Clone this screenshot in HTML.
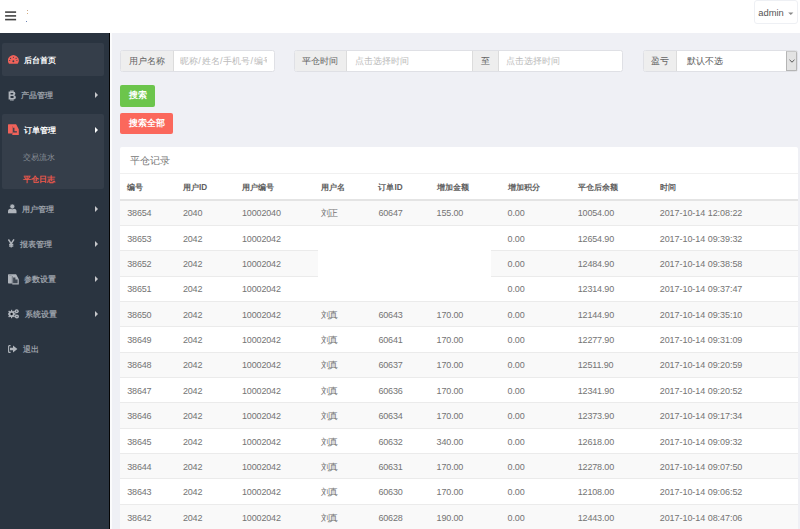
<!DOCTYPE html>
<html><head><meta charset="utf-8">
<style>
*{margin:0;padding:0;box-sizing:border-box}
html,body{width:800px;height:529px;overflow:hidden;background:#eff0f5;font-family:"Liberation Sans",sans-serif;}
.hdr{position:absolute;left:0;top:0;width:800px;height:33.4px;background:#fff;z-index:5;}
.burger i{position:absolute;left:5px;width:11px;height:1.4px;background:#4a4a4a;}
.admin{position:absolute;left:754.4px;top:0.3px;width:43.4px;height:23.5px;border:1px solid #eef0f4;border-radius:3px;background:#fff;}
.admin span{position:absolute;left:2.9px;top:6px;font-size:9.4px;color:#555;}
.admin b{position:absolute;left:33.3px;top:11.6px;width:0;height:0;border-left:2.8px solid transparent;border-right:2.8px solid transparent;border-top:2.8px solid #888;}
.side{position:absolute;left:0;top:33px;width:110px;height:496px;background:#2a3440;border-right:1px solid #050505;}
.hl{position:absolute;left:110px;top:33px;width:1.5px;height:496px;background:#fbfbfc;}
.item{position:absolute;left:2px;width:102px;height:33px;border-radius:2px;}
.item.on{background:#353e4a;}
.item .t{position:absolute;top:1.2px;line-height:33px;font-size:7.9px;color:#989ea6;font-weight:bold;white-space:nowrap;}
.item.on .t{color:#fff;font-weight:bold;}
.arr{position:absolute;left:93px;top:14.3px;width:0;height:0;border-top:3.2px solid transparent;border-bottom:3.2px solid transparent;border-left:3.4px solid #c8c8cc;}
.sub{position:absolute;left:20.5px;font-size:7.8px;color:#8a9098;white-space:nowrap;}
.ico{position:absolute;}
.main{position:absolute;left:111px;top:33px;width:689px;height:496px;}
.ig{position:absolute;height:22px;border:1px solid #dfe0e5;border-radius:2.5px;background:#fff;overflow:hidden;}
.ig .ad{position:absolute;top:0;height:20px;background:#eeeeee;border-right:1px solid #dcdcdc;font-size:9px;color:#646464;line-height:20px;text-align:center;}
.ig .ph{position:absolute;top:0;height:20px;font-size:9px;color:#bbb;line-height:20px;white-space:nowrap;}
.btn{position:absolute;left:9.4px;height:21.5px;border-radius:2px;color:#fff;font-size:9px;line-height:21.5px;text-align:center;font-weight:bold;}
.panel{position:absolute;left:9.40px;top:113.60px;width:677.40px;height:400px;background:#fff;border-radius:2px;}
.ptitle{position:absolute;left:0;top:0;width:100%;padding-left:9.4px;height:27.00px;line-height:27.00px;font-size:10.3px;color:#777;border-bottom:1px solid #f0f0f0;padding-top:0.2px;}
.row{position:absolute;left:0;width:100%;}
.row.s{background:#f9f9f9;}
.rt{position:absolute;left:0;width:100%;}
.rt span{position:absolute;top:0;font-size:9px;letter-spacing:-0.15px;color:#747474;white-space:nowrap;}
.th{position:absolute;left:0;width:100%;border-bottom:2px solid #e4e4e4;}
.th span{position:absolute;line-height:25px;font-size:8.2px;color:#606060;font-weight:bold;white-space:nowrap;}
.dd{position:absolute;right:0;top:0;width:10.6px;height:20px;background:#e3e3e3;border:1px solid #b5b5b5;border-top-color:#c8c8c8;}
.sl{font-style:normal;letter-spacing:0.8px;margin-left:0.3px}
.blank{position:absolute;background:#fff;}
</style></head><body>
<div class="hdr">
  <svg style="position:absolute;left:0;top:0" width="20" height="24" viewBox="0 0 20 24"><g fill="#444"><rect x="5.1" y="11.3" width="11" height="1.6"/><rect x="5.1" y="15.1" width="11" height="1.6"/><rect x="5.1" y="18.8" width="11" height="1.6"/></g></svg>
  <i style="position:absolute;left:26.6px;top:9.5px;width:0.9px;height:0.9px;background:#c9a98a"></i><i style="position:absolute;left:26.6px;top:12.8px;width:0.9px;height:0.9px;background:#d9b080"></i><i style="position:absolute;left:26.4px;top:20.5px;width:1.1px;height:1.1px;background:#6d84b5"></i>
  <div class="admin"><span>admin</span><svg style="position:absolute;left:32.6px;top:11.2px" width="6" height="4" viewBox="0 0 6 4"><path d="M0.2,0.5 H5.4 L2.8,3.1 Z" fill="#8a8a8a"/></svg></div>
</div>
<div class="side">
  <div class="item on" style="top:10px"><span class="t" style="left:21.5px">后台首页</span></div>
  <div class="item" style="top:45px"><span class="t" style="left:19px">产品管理</span><i class="arr"></i></div>
  <div class="item on" style="top:80.5px;height:75.7px"><span class="t" style="left:22px;top:0.5px">订单管理</span><i class="arr" style="border-left-color:#fff;top:13.8px"></i>
    <span class="sub" style="top:38.5px">交易流水</span>
    <span class="sub" style="top:60.5px;color:#f0594c;font-weight:bold">平仓日志</span>
  </div>
  <div class="item" style="top:158.5px"><span class="t" style="left:20px">用户管理</span><i class="arr"></i></div>
  <div class="item" style="top:193.5px"><span class="t" style="left:18px">报表管理</span><i class="arr"></i></div>
  <div class="item" style="top:228.5px"><span class="t" style="left:22px">参数设置</span><i class="arr"></i></div>
  <div class="item" style="top:263.5px"><span class="t" style="left:23px">系统设置</span><i class="arr"></i></div>
  <div class="item" style="top:298.5px"><span class="t" style="left:21px">退出</span></div>
<svg class="ico" style="left:8px;top:22px" width="11" height="9" viewBox="0 0 11 9"><path d="M1.0,8.7 A5.35,5.35 0 1 1 9.7,8.7 Z" fill="#f0625a"/><g fill="#353e4a"><circle cx="5.35" cy="6.2" r="0.95"/><circle cx="5.45" cy="2.3" r="0.55"/><circle cx="2.6" cy="3.4" r="0.55"/><circle cx="8.1" cy="3.4" r="0.55"/><circle cx="1.7" cy="5.5" r="0.55"/><circle cx="8.9" cy="5.5" r="0.55"/></g></svg>
<svg class="ico" style="left:7.6px;top:56.5px" width="9" height="11" viewBox="0 0 9 11"><path d="M0.6,1.6 H5 Q7.4,1.6 7.4,3.6 Q7.4,4.8 6.2,5.2 Q7.9,5.7 7.9,7.4 Q7.9,9.5 5.3,9.5 H0.6 Z M2.5,3.1 V4.6 H4.6 Q5.4,4.6 5.4,3.85 Q5.4,3.1 4.6,3.1 Z M2.5,5.9 V7.9 H4.8 Q5.8,7.9 5.8,6.9 Q5.8,5.9 4.8,5.9 Z" fill="#afb4bb" fill-rule="evenodd"/><rect x="2.4" y="0.3" width="1.2" height="1.6" fill="#afb4bb"/><rect x="4.3" y="0.3" width="1.2" height="1.6" fill="#afb4bb"/><rect x="2.4" y="9.2" width="1.2" height="1.6" fill="#afb4bb"/><rect x="4.3" y="9.2" width="1.2" height="1.6" fill="#afb4bb"/></svg>
<svg class="ico" style="left:8px;top:91px" width="11" height="11" viewBox="0 0 11 11"><path d="M0.6,0.2 H8.1 L10.8,5.2 V11 H4.3 V9.6 H0.6 Q0,9.6 0,9 V0.8 Q0,0.2 0.6,0.2 Z" fill="#f0625a"/><path d="M4.3,9.6 V2.2" stroke="#353e4a" stroke-width="0.5" opacity="0.6"/><path d="M5.1,3.8 H6.4 V7.3 H8.9 V8.6 H5.1 Z" fill="#353e4a"/></svg>
<svg class="ico" style="left:7.8px;top:170.5px" width="9" height="10" viewBox="0 0 9 10"><path d="M0,9.3 V7.4 Q0,4.7 2.6,4.7 H6 Q8.5,4.7 8.5,7.4 V9.3 Z" fill="#afb4bb"/><circle cx="4.3" cy="2.5" r="2.45" fill="#afb4bb" stroke="#2a3440" stroke-width="0.6"/></svg>
<svg class="ico" style="left:7.8px;top:205.5px" width="7" height="9" viewBox="0 0 7 9"><path d="M0.4,0.4 L3.2,4.6 L6,0.4" fill="none" stroke="#afb4bb" stroke-width="1.5"/><path d="M3.2,4.2 V8.4 M1.1,5.4 H5.3 M1.1,7 H5.3" stroke="#afb4bb" stroke-width="1.3" fill="none"/></svg>
<svg class="ico" style="left:7.8px;top:240.5px" width="11" height="11" viewBox="0 0 11 11"><path d="M0.6,0.2 H8.1 L10.8,5.2 V10.4 H4.3 V9.4 H0.6 Q0,9.4 0,8.8 V0.8 Q0,0.2 0.6,0.2 Z" fill="#afb4bb"/><path d="M4.3,9.4 V2.2" stroke="#2a3440" stroke-width="0.7" opacity="0.7"/><path d="M5.1,3.6 H7.4 V5.6 H9.6 V9.3 H5.1 Z" fill="#2a3440" opacity="0.85"/><rect x="1.2" y="1.4" width="2.4" height="0.6" fill="#2a3440" opacity="0.3"/></svg>
<svg class="ico" style="left:7.8px;top:276px" width="12" height="10" viewBox="0 0 12 10"><g fill="#afb4bb"><circle cx="3.6" cy="5" r="3.1"/><rect x="3" y="0.8" width="1.2" height="8.4"/><rect x="-0.6" y="4.4" width="8.4" height="1.2"/><rect x="3" y="0.8" width="1.2" height="8.4" transform="rotate(45 3.6 5)"/><rect x="3" y="0.8" width="1.2" height="8.4" transform="rotate(-45 3.6 5)"/><circle cx="8.7" cy="2.2" r="2"/><circle cx="8.9" cy="7.5" r="2.1"/></g><circle cx="3.6" cy="5" r="1.2" fill="#111820"/><circle cx="8.7" cy="2.2" r="0.6" fill="#2a3440"/><circle cx="8.9" cy="7.5" r="0.6" fill="#2a3440"/></svg>
<svg class="ico" style="left:7.6px;top:312px" width="10" height="8" viewBox="0 0 10 8"><path d="M2.6,0.6 H1.3 Q0.6,0.6 0.6,1.3 V6.7 Q0.6,7.4 1.3,7.4 H2.6" fill="none" stroke="#afb4bb" stroke-width="1.1"/><path d="M2,2.8 H5 V0.6 L9.4,4 L5,7.4 V5.2 H2 Z" fill="#afb4bb"/></svg>
</div>
<div class="hl"></div>
<div class="main">
  <div class="ig" style="left:9.4px;top:17px;width:155px"><div class="ad" style="left:0;width:52.5px">用户名称</div><div class="ph" style="left:58.6px;width:86.6px;overflow:hidden;font-size:9.2px">昵称<i class="sl">/</i>姓名<i class="sl">/</i>手机号<i class="sl">/</i>编号</div></div>
  <div class="ig" style="left:182.5px;top:17px;width:329px"><div class="ad" style="left:0;width:52.5px">平仓时间</div><div class="ph" style="left:60px">点击选择时间</div><div class="ad" style="left:177px;width:27px;border-left:1px solid #dcdcdc">至</div><div class="ph" style="left:211px">点击选择时间</div></div>
  <div class="ig" style="left:531.75px;top:17px;width:155px"><div class="ad" style="left:0;width:33px">盈亏</div><div class="ph" style="left:43.5px;color:#555">默认不选</div><div class="dd"><svg width="6" height="4" viewBox="0 0 6 4" style="position:absolute;left:1.4px;top:7.2px"><path d="M0.5,0.8 L3,3.2 L5.5,0.8" fill="none" stroke="#444" stroke-width="0.9"/></svg></div></div>
  <div class="btn" style="top:52px;width:34.5px;background:#6cc54c">搜索</div>
  <div class="btn" style="top:79.8px;height:21.2px;line-height:21.2px;width:52.5px;background:#fb685c">搜索全部</div>
  <div class="panel">
    <div class="ptitle">平仓记录</div>
<div class="th" style="top:27.00px;height:27.00px"><span style="left:6.8px;top:1.90px">编号</span><span style="left:62.5px;top:1.90px">用户ID</span><span style="left:121.6px;top:1.90px">用户编号</span><span style="left:200.2px;top:1.90px">用户名</span><span style="left:258.0px;top:1.90px">订单ID</span><span style="left:316.2px;top:1.90px">增加金额</span><span style="left:387.2px;top:1.90px">增加积分</span><span style="left:457.3px;top:1.90px">平仓后余额</span><span style="left:539.3px;top:1.90px">时间</span></div>
<div class="row s" style="top:54.00px;height:25.35px;"><div class="rt" style="top:0.80px;height:25.35px;line-height:25.35px"><span style="left:6.8px">38654</span><span style="left:62.5px">2040</span><span style="left:121.6px">10002040</span><span style="left:200.2px">刘正</span><span style="left:258.0px">60647</span><span style="left:316.2px">155.00</span><span style="left:387.2px">0.00</span><span style="left:457.3px">10054.00</span><span style="left:539.3px;letter-spacing:-0.05px">2017-10-14 12:08:22</span></div></div>
<div class="row" style="top:78.35px;height:26.35px;border-top:1px solid #ebebeb;"><div class="rt" style="top:0.80px;height:25.35px;line-height:25.35px"><span style="left:6.8px">38653</span><span style="left:62.5px">2042</span><span style="left:121.6px">10002042</span><span style="left:387.2px">0.00</span><span style="left:457.3px">12654.90</span><span style="left:539.3px;letter-spacing:-0.05px">2017-10-14 09:39:32</span></div></div>
<div class="row s" style="top:103.70px;height:26.35px;border-top:1px solid #ebebeb;"><div class="rt" style="top:0.80px;height:25.35px;line-height:25.35px"><span style="left:6.8px">38652</span><span style="left:62.5px">2042</span><span style="left:121.6px">10002042</span><span style="left:387.2px">0.00</span><span style="left:457.3px">12484.90</span><span style="left:539.3px;letter-spacing:-0.05px">2017-10-14 09:38:58</span></div></div>
<div class="row" style="top:129.05px;height:26.35px;border-top:1px solid #ebebeb;"><div class="rt" style="top:0.80px;height:25.35px;line-height:25.35px"><span style="left:6.8px">38651</span><span style="left:62.5px">2042</span><span style="left:121.6px">10002042</span><span style="left:387.2px">0.00</span><span style="left:457.3px">12314.90</span><span style="left:539.3px;letter-spacing:-0.05px">2017-10-14 09:37:47</span></div></div>
<div class="row s" style="top:154.40px;height:26.35px;border-top:1px solid #ebebeb;"><div class="rt" style="top:0.80px;height:25.35px;line-height:25.35px"><span style="left:6.8px">38650</span><span style="left:62.5px">2042</span><span style="left:121.6px">10002042</span><span style="left:200.2px">刘真</span><span style="left:258.0px">60643</span><span style="left:316.2px">170.00</span><span style="left:387.2px">0.00</span><span style="left:457.3px">12144.90</span><span style="left:539.3px;letter-spacing:-0.05px">2017-10-14 09:35:10</span></div></div>
<div class="row" style="top:179.75px;height:26.35px;border-top:1px solid #ebebeb;"><div class="rt" style="top:0.80px;height:25.35px;line-height:25.35px"><span style="left:6.8px">38649</span><span style="left:62.5px">2042</span><span style="left:121.6px">10002042</span><span style="left:200.2px">刘真</span><span style="left:258.0px">60641</span><span style="left:316.2px">170.00</span><span style="left:387.2px">0.00</span><span style="left:457.3px">12277.90</span><span style="left:539.3px;letter-spacing:-0.05px">2017-10-14 09:31:09</span></div></div>
<div class="row s" style="top:205.10px;height:26.35px;border-top:1px solid #ebebeb;"><div class="rt" style="top:0.80px;height:25.35px;line-height:25.35px"><span style="left:6.8px">38648</span><span style="left:62.5px">2042</span><span style="left:121.6px">10002042</span><span style="left:200.2px">刘真</span><span style="left:258.0px">60637</span><span style="left:316.2px">170.00</span><span style="left:387.2px">0.00</span><span style="left:457.3px">12511.90</span><span style="left:539.3px;letter-spacing:-0.05px">2017-10-14 09:20:59</span></div></div>
<div class="row" style="top:230.45px;height:26.35px;border-top:1px solid #ebebeb;"><div class="rt" style="top:0.80px;height:25.35px;line-height:25.35px"><span style="left:6.8px">38647</span><span style="left:62.5px">2042</span><span style="left:121.6px">10002042</span><span style="left:200.2px">刘真</span><span style="left:258.0px">60636</span><span style="left:316.2px">170.00</span><span style="left:387.2px">0.00</span><span style="left:457.3px">12341.90</span><span style="left:539.3px;letter-spacing:-0.05px">2017-10-14 09:20:52</span></div></div>
<div class="row s" style="top:255.80px;height:26.35px;border-top:1px solid #ebebeb;"><div class="rt" style="top:0.80px;height:25.35px;line-height:25.35px"><span style="left:6.8px">38646</span><span style="left:62.5px">2042</span><span style="left:121.6px">10002042</span><span style="left:200.2px">刘真</span><span style="left:258.0px">60634</span><span style="left:316.2px">170.00</span><span style="left:387.2px">0.00</span><span style="left:457.3px">12373.90</span><span style="left:539.3px;letter-spacing:-0.05px">2017-10-14 09:17:34</span></div></div>
<div class="row" style="top:281.15px;height:26.35px;border-top:1px solid #ebebeb;"><div class="rt" style="top:0.80px;height:25.35px;line-height:25.35px"><span style="left:6.8px">38645</span><span style="left:62.5px">2042</span><span style="left:121.6px">10002042</span><span style="left:200.2px">刘真</span><span style="left:258.0px">60632</span><span style="left:316.2px">340.00</span><span style="left:387.2px">0.00</span><span style="left:457.3px">12618.00</span><span style="left:539.3px;letter-spacing:-0.05px">2017-10-14 09:09:32</span></div></div>
<div class="row s" style="top:306.50px;height:26.35px;border-top:1px solid #ebebeb;"><div class="rt" style="top:0.80px;height:25.35px;line-height:25.35px"><span style="left:6.8px">38644</span><span style="left:62.5px">2042</span><span style="left:121.6px">10002042</span><span style="left:200.2px">刘真</span><span style="left:258.0px">60631</span><span style="left:316.2px">170.00</span><span style="left:387.2px">0.00</span><span style="left:457.3px">12278.00</span><span style="left:539.3px;letter-spacing:-0.05px">2017-10-14 09:07:50</span></div></div>
<div class="row" style="top:331.85px;height:26.35px;border-top:1px solid #ebebeb;"><div class="rt" style="top:0.80px;height:25.35px;line-height:25.35px"><span style="left:6.8px">38643</span><span style="left:62.5px">2042</span><span style="left:121.6px">10002042</span><span style="left:200.2px">刘真</span><span style="left:258.0px">60630</span><span style="left:316.2px">170.00</span><span style="left:387.2px">0.00</span><span style="left:457.3px">12108.00</span><span style="left:539.3px;letter-spacing:-0.05px">2017-10-14 09:06:52</span></div></div>
<div class="row s" style="top:357.20px;height:26.35px;border-top:1px solid #ebebeb;"><div class="rt" style="top:0.80px;height:25.35px;line-height:25.35px"><span style="left:6.8px">38642</span><span style="left:62.5px">2042</span><span style="left:121.6px">10002042</span><span style="left:200.2px">刘真</span><span style="left:258.0px">60628</span><span style="left:316.2px">190.00</span><span style="left:387.2px">0.00</span><span style="left:457.3px">12443.00</span><span style="left:539.3px;letter-spacing:-0.05px">2017-10-14 08:47:06</span></div></div>
<div class="blank" style="left:197.9px;top:79.35px;width:172.3px;height:75.05px"></div>
  </div>
</div>
</body></html>
